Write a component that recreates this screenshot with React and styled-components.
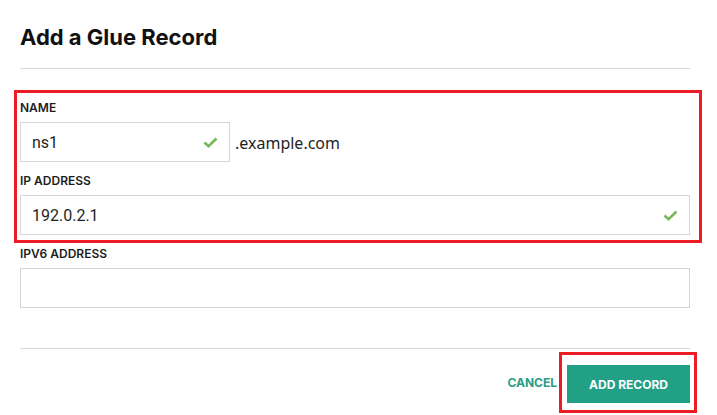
import React from "react";
import styled, { createGlobalStyle } from "styled-components";

const GlobalStyle = createGlobalStyle`
  html, body {
    margin: 0;
    padding: 0;
    background: #ffffff;
  }
  body {
    font-family: Inter, "Liberation Sans", sans-serif;
    color: #1d1d1d;
  }
`;

function Check() {
  return (
    <CheckIcon width="15" height="11" viewBox="0 0 15 11">
      <path d="M1.5 5.5 L5.5 9.2 L13.5 1.5" fill="none" stroke="#76b85a" strokeWidth="2.6" />
    </CheckIcon>
  );
}

function Field({ label, value, valid, narrow, suffix }) {
  return (
    <FieldBlock>
      <Label>{label}</Label>
      <InputRow>
        <InputBox $narrow={narrow}>
          <Value>{value}</Value>
          {valid && <Check />}
        </InputBox>
        {suffix && <Suffix>{suffix}</Suffix>}
      </InputRow>
    </FieldBlock>
  );
}

export default function App() {
  return (
    <>
      <GlobalStyle />
      <Dialog>
        <Title>Add a Glue Record</Title>
        <Divider />
        <Highlight>
          <Field label="NAME" value="ns1" valid narrow suffix=".example.com" />
          <Field label="IP ADDRESS" value="192.0.2.1" valid />
        </Highlight>
        <Ipv6Block>
          <Field label="IPV6 ADDRESS" value="" />
        </Ipv6Block>
        <FooterDivider />
        <Footer>
          <CancelButton>CANCEL</CancelButton>
          <ButtonHighlight>
            <PrimaryButton>ADD RECORD</PrimaryButton>
          </ButtonHighlight>
        </Footer>
      </Dialog>
    </>
  );
}

const Dialog = styled.div`
  width: 670px;
  padding: 0 27px 0 20px;
`;

const Title = styled.h1`
  margin: 0;
  padding-top: 23px;
  font-size: 22px;
  line-height: 29px;
  font-weight: 700;
  color: #111;
`;

const Divider = styled.div`
  height: 1px;
  background: #d8d8d8;
  margin-top: 16px;
`;

const Highlight = styled.div`
  margin: 21px -12px 0 -6px;
  border: 3px solid #ed1c24;
  padding: 7px 9px 5px 3px;
  display: flex;
  flex-direction: column;
  gap: 11px;
`;

const FieldBlock = styled.div`
  display: flex;
  flex-direction: column;
`;

const Label = styled.div`
  font-size: 12px;
  line-height: 16px;
  font-weight: 600;
  color: #1d1d1d;
  margin-bottom: 6px;
`;

const InputRow = styled.div`
  display: flex;
  align-items: center;
`;

const InputBox = styled.div`
  box-sizing: border-box;
  height: 40px;
  width: ${(p) => (p.$narrow ? "210px" : "100%")};
  border: 1px solid #d6d6d6;
  background: #fff;
  display: flex;
  align-items: center;
  padding: 0 11px 0 11px;
`;

const Value = styled.span`
  flex: 1;
  font-family: Roboto, "Liberation Sans", sans-serif;
  font-size: 16px;
  color: #1f1f1f;
`;

const CheckIcon = styled.svg`
  display: block;
`;

const Suffix = styled.span`
  margin-left: 5px;
  font-family: "Noto Sans", "Open Sans", sans-serif;
  font-size: 16px;
  color: #1f1f1f;
  position: relative;
  top: 1px;
`;

const Ipv6Block = styled.div`
  margin-top: 3px;
`;

const FooterDivider = styled.div`
  height: 1px;
  background: #d8d8d8;
  margin-top: 40px;
`;

const Footer = styled.div`
  display: flex;
  justify-content: flex-end;
  align-items: center;
  margin-top: 3px;
  margin-right: -7px;
`;

const CancelButton = styled.button`
  border: none;
  background: none;
  padding: 0;
  margin-right: 2px;
  font-family: Inter, "Liberation Sans", sans-serif;
  font-size: 12px;
  font-weight: 700;
  color: #2a9d86;
  cursor: pointer;
`;

const ButtonHighlight = styled.div`
  border: 3px solid #ed1c24;
  padding: 10px 4px 7px 5px;
`;

const PrimaryButton = styled.button`
  display: block;
  width: 123px;
  height: 38px;
  border: none;
  background: #22a085;
  color: #fff;
  font-family: Inter, "Liberation Sans", sans-serif;
  font-size: 12px;
  font-weight: 700;
  cursor: pointer;
`;
